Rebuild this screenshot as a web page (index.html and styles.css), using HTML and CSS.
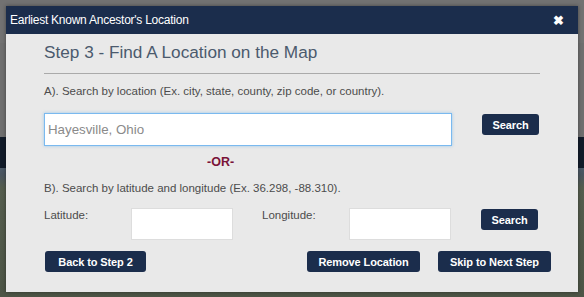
FILE: index.html
```html
<!DOCTYPE html>
<html>
<head>
    <title>Earliest Known Ancestor's Location</title>
    <link rel="stylesheet" href="styles.css">
</head>
<body>
    <div class="page">
        <div class="page-top"></div>
        <div class="page-nav"></div>
        <div class="page-map"></div>
    </div>

    <div class="modal">
        <div class="modal-head">
            <span class="modal-title">Earliest Known Ancestor's Location</span>
            <span class="modal-close">&#10006;</span>
        </div>
        <div class="modal-body">
            <h2 class="step">Step 3 - Find A Location on the Map</h2>
            <p class="hint">A). Search by location (Ex. city, state, county, zip code, or country).</p>
            <div class="row row-search">
                <input class="loc-input" type="text" value="Hayesville, Ohio">
                <button class="btn">Search</button>
            </div>
            <div class="or">-OR-</div>
            <p class="hint">B). Search by latitude and longitude (Ex. 36.298, -88.310).</p>
            <div class="row row-coords">
                <label class="coord-label">Latitude:</label>
                <input class="coord-input" type="text">
                <label class="coord-label lng">Longitude:</label>
                <input class="coord-input" type="text">
                <button class="btn btn-coords">Search</button>
            </div>
            <div class="row row-nav">
                <button class="btn btn-wide">Back to Step 2</button>
                <span class="spacer"></span>
                <button class="btn btn-wide2">Remove Location</button>
                <button class="btn btn-wide2">Skip to Next Step</button>
            </div>
        </div>
    </div>
</body>
</html>
```

FILE: styles.css
```css
* { box-sizing: border-box; }
body { margin: 0; font-family: "Liberation Sans", Arial, sans-serif; background: #6e6e6e; width: 584px; height: 297px; overflow: hidden; }
.page { display: flex; flex-direction: column; height: 297px; }
.page-top { height: 137px; background: #6f6f6f; border-top: 43px solid #727272; }
.page-nav { height: 31px; background: #111b29; }
.page-map { flex: 1; background: linear-gradient(180deg, #4c5a68 0, #4a5560 6px, #555d4e 20px, #4d5546 100%); }

.modal { position: absolute; left: 6px; top: 6px; width: 572px; height: 286px; background: #e9e9e9; box-shadow: 0 0 4px rgba(0,0,0,0.4); }
.modal-head { height: 28px; background: #1b2d4c; display: flex; align-items: center; justify-content: space-between; padding: 0 14px 0 4px; }
.modal-title { color: #fff; font-size: 12px; letter-spacing: -0.25px; }
.modal-close { color: #fff; font-size: 13px; font-weight: bold; }

.modal-body { padding: 0 38px 0 38px; }
.step { margin: 0; padding: 7px 0 10px; font-size: 17.2px; font-weight: normal; color: #4b5a6d; border-bottom: 1px solid #aaa; width: 496px; line-height: 22px; }
.hint { margin: 0; font-size: 11.5px; color: #4c4c4c; line-height: 13px; }
.modal-body > .hint:first-of-type { margin-top: 11px; }

.row { display: flex; align-items: flex-start; }
.row-search { margin-top: 15px; }
.loc-input { width: 408px; height: 33px; border: 1px solid #7ab9ef; box-shadow: 0 0 3px rgba(102,175,233,0.6); padding: 0 3px; font-family: inherit; font-size: 13.3px; color: #8a8a8a; background: #fff; outline: none; }
.btn { background: #1b2d4c; color: #fff; border: none; border-radius: 3px; font-family: inherit; font-size: 11px; font-weight: bold; height: 21px; padding: 0; letter-spacing: -0.1px; }
.row-search .btn { width: 57px; margin: 1px 0 0 30px; }
.or { margin: 8px 0 0 163px; color: #7a1338; font-size: 12.5px; font-weight: bold; line-height: 16px; }
.modal-body > .hint:nth-of-type(2) { margin-top: 12px; }

.row-coords { margin-top: 13px; }
.coord-label { font-size: 11.5px; color: #4c4c4c; width: 87px; padding-top: 1px; }
.coord-label.lng { width: 87px; margin-left: 29px; }
.coord-input { width: 102px; height: 32px; border: 1px solid #ddd; background: #fff; }
.btn-coords { width: 57px; margin: 1px 0 0 30px; }

.row-nav { margin-top: 11px; width: 507px; }
.btn-wide { width: 101px; margin-left: 1px; }
.spacer { flex: 1; }
.btn-wide2 { width: 113px; margin-left: 18px; }
```
